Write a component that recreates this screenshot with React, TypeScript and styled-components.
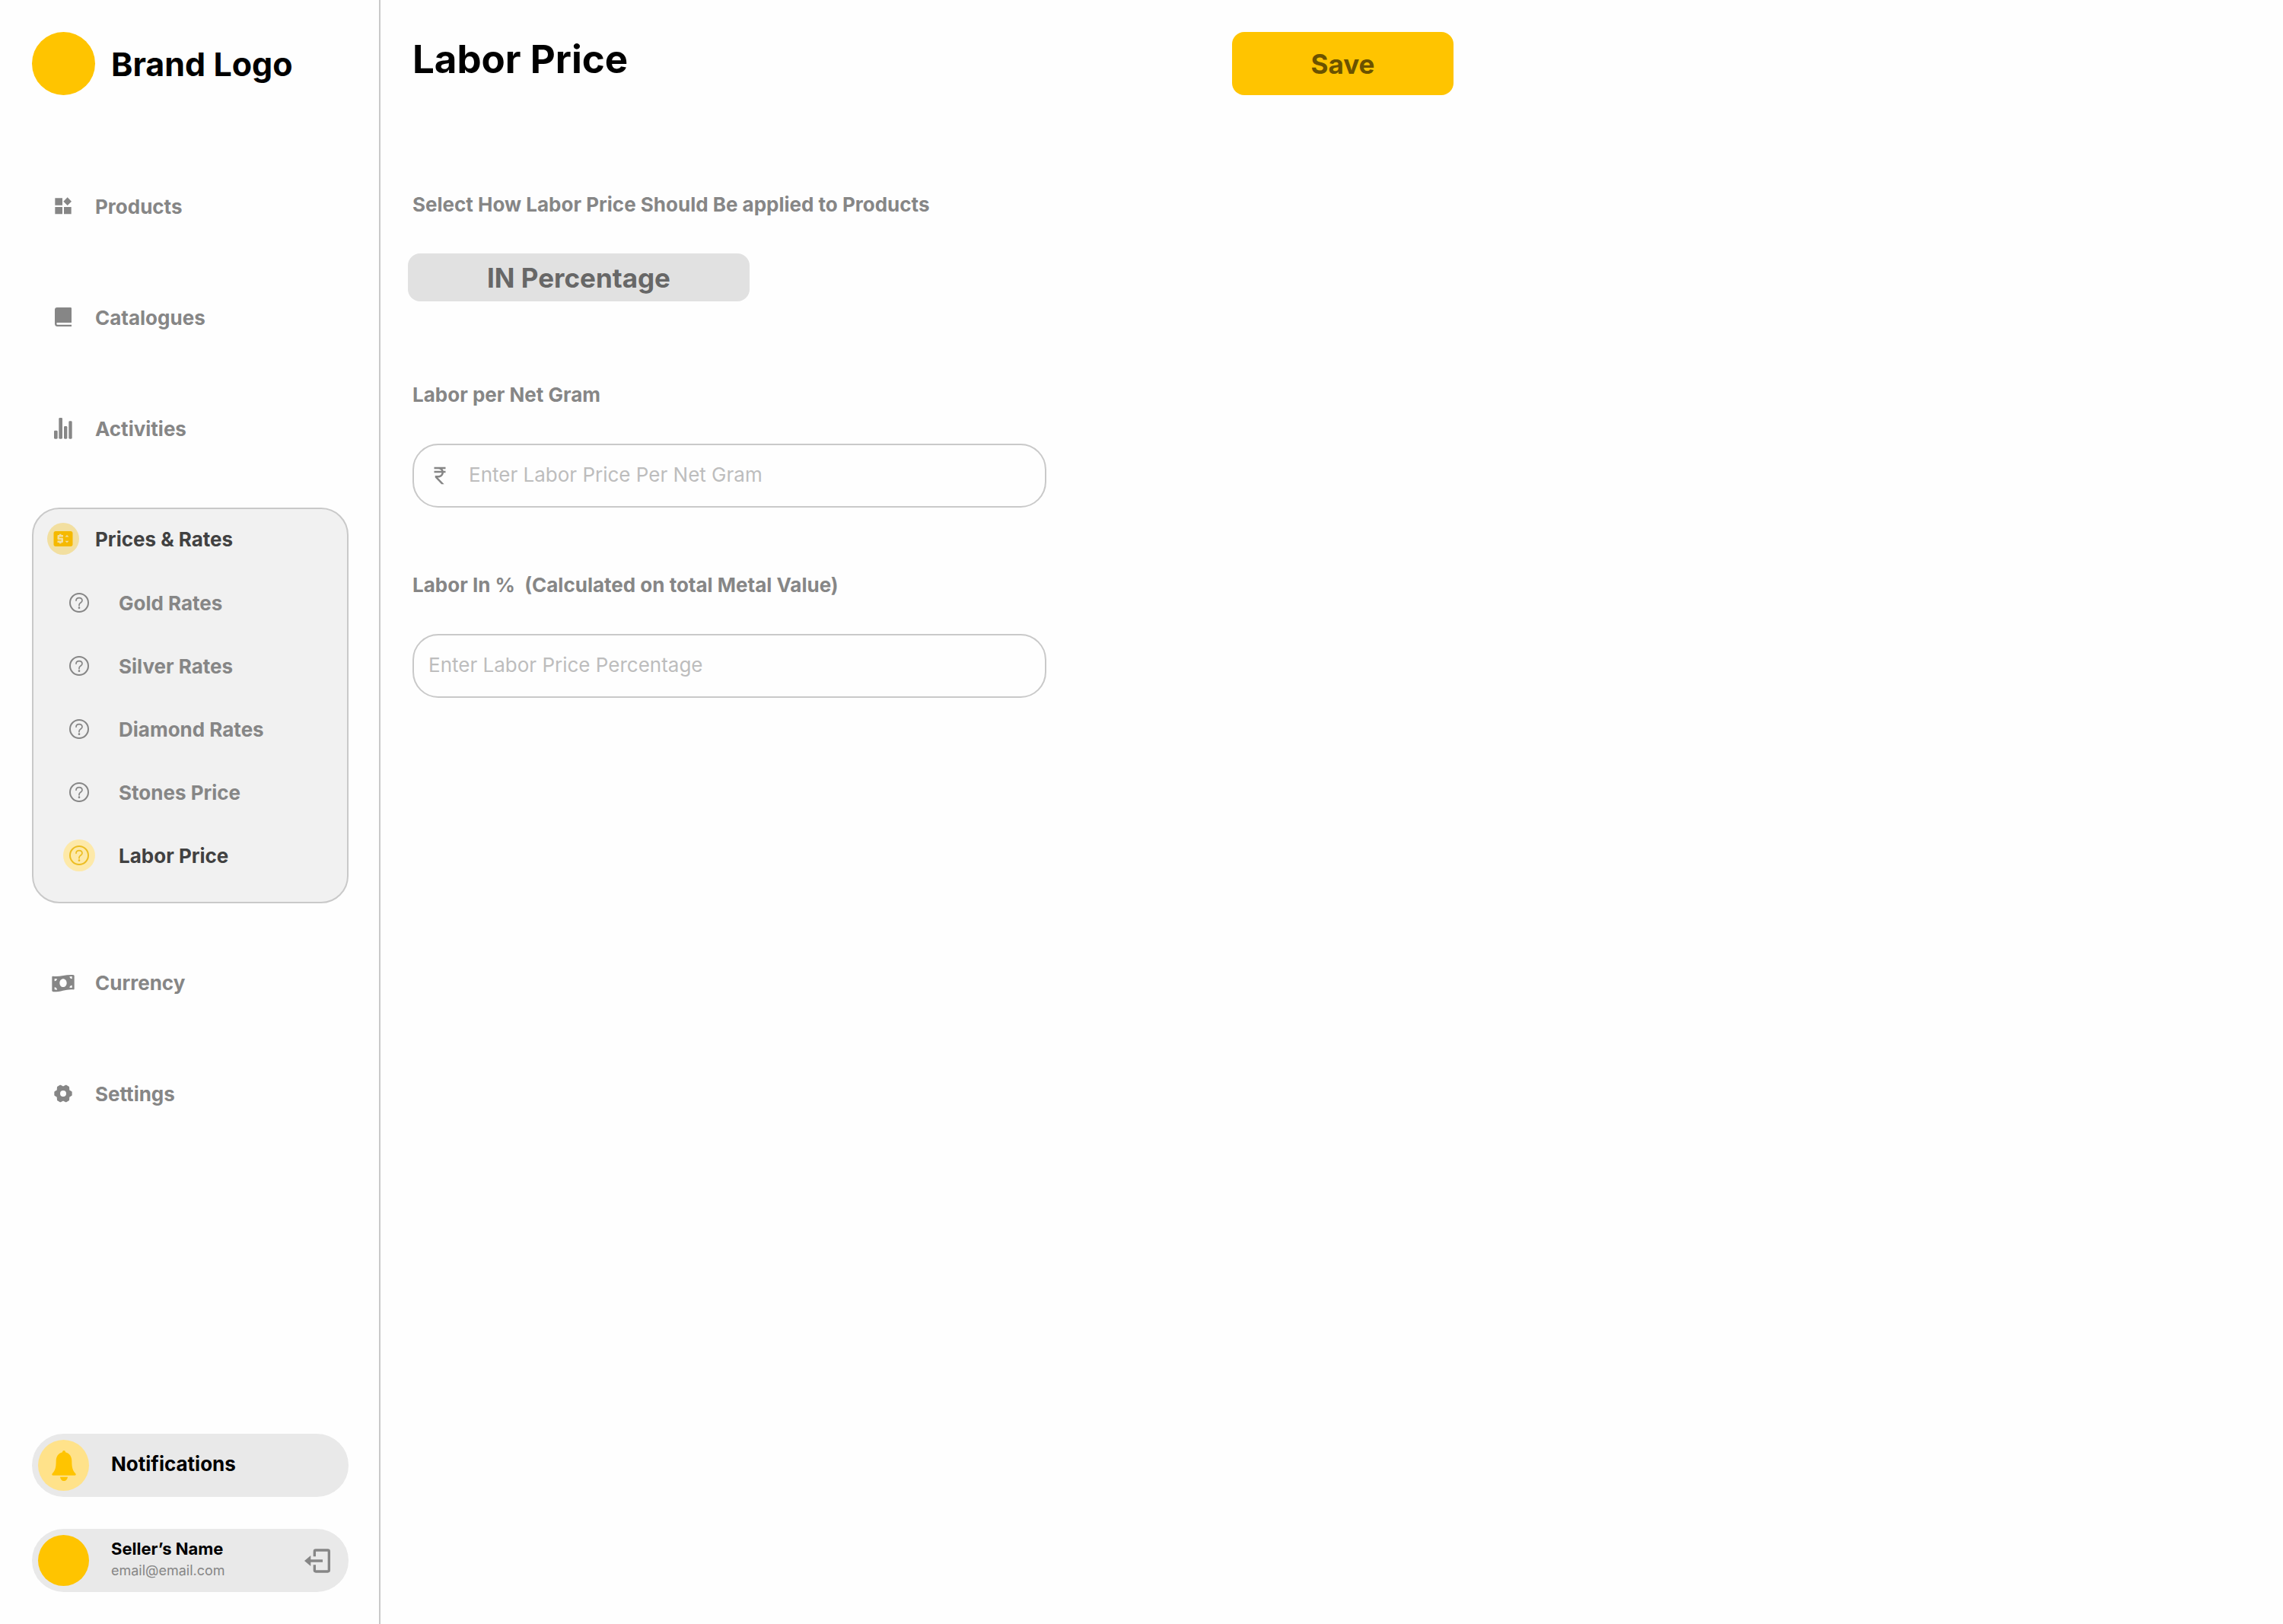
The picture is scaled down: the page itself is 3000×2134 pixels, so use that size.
import React from "react";
import styled, { createGlobalStyle, css } from "styled-components";
import { MdCurrencyRupee, MdPriceChange } from "react-icons/md";

const color = {
  brand: "#ffc400",
  brandSoft: "#ffe28a",
  muted: "#868686",
  strong: "#414141",
  line: "#c9c9c9",
  placeholder: "#bdbdbd",
  panel: "#f1f1f1",
  pill: "#e9e9e9",
};

const GlobalStyle = createGlobalStyle`
  *, *::before, *::after { box-sizing: border-box; }
  body {
    margin: 0;
    background: #fefefe;
    color: #000;
    font-family: Inter, "Open Sans", sans-serif;
  }
  button, input, select { font: inherit; color: inherit; }
  ul { list-style: none; margin: 0; padding: 0; }
  h1, p { margin: 0; }
`;

const Page = styled.div`
  display: flex;
  min-height: 100vh;
`;

const Sidebar = styled.aside`
  flex: 0 0 500px;
  display: flex;
  flex-direction: column;
  padding: 42px 40px 42px 42px;
  border-right: 2px solid ${color.line};
`;

const Brand = styled.a`
  display: flex;
  align-items: center;
  gap: 21px;
  color: #000;
  font-size: 43px;
  font-weight: 700;
  text-decoration: none;
`;

const BrandMark = styled.span`
  width: 83px;
  height: 83px;
  border-radius: 50%;
  background: ${color.brand};
`;

const Nav = styled.nav`
  display: flex;
  flex-direction: column;
  gap: 83px;
  margin: 125px 0 83px;
`;

const NavList = styled.ul`
  display: flex;
  flex-direction: column;
  gap: 104px;
  padding-left: 20px;
`;

const NavPanel = styled.section`
  padding: 18px 18px 40px;
  border: 2px solid ${color.line};
  border-radius: 36px;
  background: ${color.panel};
`;

const SubList = styled.ul`
  display: flex;
  flex-direction: column;
  gap: 41px;
  margin-top: 42px;
  padding-left: 21px;
`;

const NavLink = styled.a<{ $active?: boolean; $nested?: boolean }>`
  display: flex;
  align-items: center;
  gap: ${(p) => (p.$nested ? 31 : 21)}px;
  height: 42px;
  color: ${(p) => (p.$active ? color.strong : color.muted)};
  font-size: 26px;
  font-weight: 700;
  text-decoration: none;
  white-space: nowrap;
`;

const IconSlot = styled.span<{ $tone?: "gold" | "sun" }>`
  flex: none;
  display: grid;
  place-items: center;
  width: 42px;
  height: 42px;
  border-radius: 50%;
  ${(p) => p.$tone === "gold" && css`background: #f2dfa0; color: #f5b900;`}
  ${(p) => p.$tone === "sun" && css`background: #fde9a9; color: #ecbd22;`}
`;

const SidebarFooter = styled.div`
  display: flex;
  flex-direction: column;
  gap: 42px;
  margin-top: auto;
`;

const pill = css`
  display: flex;
  align-items: center;
  gap: 29px;
  width: 100%;
  height: 83px;
  padding: 0 24px 0 8px;
  border: 0;
  border-radius: 42px;
  background: ${color.pill};
  text-align: left;
`;

const NotificationsButton = styled.button`
  ${pill}
  font-size: 26px;
  font-weight: 700;
  cursor: pointer;
`;

const ProfileCard = styled.div`
  ${pill}
`;

const Avatar = styled.span<{ $soft?: boolean }>`
  flex: none;
  display: grid;
  place-items: center;
  width: 67px;
  height: 67px;
  border-radius: 50%;
  background: ${(p) => (p.$soft ? color.brandSoft : color.brand)};
  color: ${color.brand};
`;

const PillText = styled.span`
  flex: 1;
  padding-bottom: 4px;
`;

const SellerName = styled.p`
  font-size: 22px;
  line-height: 31px;
  font-weight: 700;
`;

const SellerEmail = styled.p`
  color: ${color.muted};
  font-size: 18px;
  line-height: 26px;
`;

const LogoutButton = styled.button`
  display: grid;
  place-items: center;
  padding: 0;
  border: 0;
  background: none;
  color: ${color.muted};
  cursor: pointer;
`;

const Main = styled.main`
  flex: 1;
  min-width: 0;
  padding: 42px;
`;

const Header = styled.header`
  display: flex;
  align-items: flex-start;
  justify-content: space-between;
  max-width: 1368px;
`;

const Title = styled.h1`
  font-size: 51px;
  line-height: 72px;
  font-weight: 700;
`;

const SaveButton = styled.button`
  width: 291px;
  height: 83px;
  border: 0;
  border-radius: 16px;
  background: ${color.brand};
  color: #6b5200;
  font-size: 35px;
  font-weight: 700;
  cursor: pointer;
`;

const Form = styled.form`
  display: flex;
  flex-direction: column;
  gap: 83px;
  margin-top: 125px;
`;

const Field = styled.div`
  display: flex;
  flex-direction: column;
  gap: 46px;
`;

const FieldLabel = styled.label`
  color: ${color.muted};
  font-size: 26px;
  line-height: 37px;
  font-weight: 700;
  white-space: pre-wrap;
`;

const Control = styled.div`
  height: 84px;
`;

const ModeSelect = styled.select`
  appearance: none;
  width: 449px;
  height: 63px;
  margin: 0 -6px;
  padding: 0;
  border: 0;
  border-radius: 16px;
  background: #e1e1e1;
  color: #676767;
  font-size: 35px;
  font-weight: 700;
  text-align: center;
  text-align-last: center;
`;

const TextBox = styled.div`
  display: flex;
  align-items: center;
  gap: 23px;
  max-width: 833px;
  height: 84px;
  padding: 0 19px;
  border: 2px solid ${color.line};
  border-radius: 34px;
  color: ${color.muted};
`;

const TextInput = styled.input`
  flex: 1;
  min-width: 0;
  height: 100%;
  padding: 0 0 4px;
  border: 0;
  outline: 0;
  background: none;
  color: ${color.strong};
  font-size: 26px;
  &::placeholder {
    color: ${color.placeholder};
    opacity: 1;
  }
`;

const Glyph = ({ children }: { children: React.ReactNode }) => (
  <svg width="42" height="42" viewBox="0 0 126 126" fill="currentColor" aria-hidden="true">
    {children}
  </svg>
);

const ProductsIcon = () => (
  <Glyph>
    <path d="M31 31h29v28H31zM31 66h29v28H31zM66 66h29v28H66zM80 28l16 16-16 16-16-16z" />
  </Glyph>
);

const CataloguesIcon = () => (
  <Glyph>
    <path d="M39 24h53q4 0 4 4v56H40q-3 0-3 4t3 4h56v7H40q-10 0-10-11V33q0-9 9-9z" />
  </Glyph>
);

const ActivitiesIcon = () => (
  <Glyph>
    <rect x="27" y="71" width="14" height="33" rx="4" />
    <rect x="46" y="21" width="14" height="83" rx="4" />
    <rect x="66" y="54" width="13" height="50" rx="4" />
    <rect x="85" y="34" width="13" height="70" rx="4" />
  </Glyph>
);

const CurrencyIcon = () => (
  <Glyph>
    <path
      fillRule="evenodd"
      d="M19 41q0-3 3-3c28 4 48-7 80-5q5 1 5 4v51q0 4-4 3c-28-3-45 9-78 9q-6-1-6-4zM63 49c-8 0-14 7-14 16s6 16 14 16 14-7 14-16-6-16-14-16zM29 48v10q8 0 10-9zM29 82v9l10 1q-1-9-10-10zM98 39l-10 1q2 9 10 9zM98 74q-9 1-10 9l10 1z"
    />
  </Glyph>
);

const SettingsIcon = () => (
  <Glyph>
    <path
      fillRule="evenodd"
      stroke="currentColor"
      strokeWidth="6"
      strokeLinejoin="round"
      d="M95 57v12L85 75.500 84 88 74 94 63 88 52 94 42 88 41 75.500 31 69V57L41 50.500 42 38 52 32 63 38 74 32 84 38 85 50.500zM63 48a15 15 0 1 0 0 30 15 15 0 1 0 0-30z"
    />
  </Glyph>
);

const QuestionIcon = () => (
  <Glyph>
    <circle cx="63" cy="63" r="36" fill="none" stroke="currentColor" strokeWidth="6" />
    <path d="M51 55c0-7 5-11 12-11s12 4 12 11c0 8-12 8-12 16v3" fill="none" stroke="currentColor" strokeWidth="5" strokeLinecap="round" />
    <circle cx="63" cy="83" r="4" />
  </Glyph>
);

const BellIcon = () => (
  <svg width="42" height="42" viewBox="-63 -63 126 126" fill="currentColor" aria-hidden="true">
    <path d="M0-60c4 0 6 3 6 7 16 4 25 17 25 35 0 24 3 36 14 48q3 3 2 6-1 2-4 2h-86q-3 0-4-2-1-3 2-6c11-12 14-24 14-48 0-18 9-31 25-35 0-4 2-7 6-7z" />
    <path d="M-15 44h30c-1 9-7 16-15 16s-14-7-15-16z" />
  </svg>
);

const LogoutIcon = () => (
  <svg width="34" height="32" viewBox="0 0 102 96" fill="none" stroke="currentColor" strokeWidth="10" aria-hidden="true">
    <path d="M40 31V11q0-5 5-5h47q5 0 5 5v74q0 5-5 5H45q-5 0-5-5V64M20 48h52" />
    <path d="M0 48l25-21v42z" fill="currentColor" stroke="none" />
  </svg>
);

type Item = { label: string; icon: React.ReactNode };

const topItems: Item[] = [
  { label: "Products", icon: <ProductsIcon /> },
  { label: "Catalogues", icon: <CataloguesIcon /> },
  { label: "Activities", icon: <ActivitiesIcon /> },
];

const rateItems = ["Gold Rates", "Silver Rates", "Diamond Rates", "Stones Price", "Labor Price"];

const bottomItems: Item[] = [
  { label: "Currency", icon: <CurrencyIcon /> },
  { label: "Settings", icon: <SettingsIcon /> },
];

const NavItems = ({ items }: { items: Item[] }) => (
  <NavList>
    {items.map((item) => (
      <li key={item.label}>
        <NavLink href="#">
          <IconSlot>{item.icon}</IconSlot>
          {item.label}
        </NavLink>
      </li>
    ))}
  </NavList>
);

export default function App() {
  return (
    <>
      <GlobalStyle />
      <Page>
        <Sidebar>
          <Brand href="#">
            <BrandMark />
            Brand Logo
          </Brand>
          <Nav>
            <NavItems items={topItems} />
            <NavPanel>
              <NavLink href="#" $active>
                <IconSlot $tone="gold">
                  <MdPriceChange size={30} />
                </IconSlot>
                Prices &amp; Rates
              </NavLink>
              <SubList>
                {rateItems.map((label) => {
                  const active = label === "Labor Price";
                  return (
                    <li key={label}>
                      <NavLink href="#" $nested $active={active} aria-current={active ? "page" : undefined}>
                        <IconSlot $tone={active ? "sun" : undefined}>
                          <QuestionIcon />
                        </IconSlot>
                        {label}
                      </NavLink>
                    </li>
                  );
                })}
              </SubList>
            </NavPanel>
            <NavItems items={bottomItems} />
          </Nav>
          <SidebarFooter>
            <NotificationsButton type="button">
              <Avatar $soft>
                <BellIcon />
              </Avatar>
              <PillText>Notifications</PillText>
            </NotificationsButton>
            <ProfileCard>
              <Avatar />
              <PillText as="div">
                <SellerName>Seller’s Name</SellerName>
                <SellerEmail>email@email.com</SellerEmail>
              </PillText>
              <LogoutButton type="button" aria-label="Log out">
                <LogoutIcon />
              </LogoutButton>
            </ProfileCard>
          </SidebarFooter>
        </Sidebar>
        <Main>
          <Header>
            <Title>Labor Price</Title>
            <SaveButton type="submit" form="labor-form">
              Save
            </SaveButton>
          </Header>
          <Form id="labor-form" onSubmit={(e) => e.preventDefault()}>
            <Field>
              <FieldLabel htmlFor="mode">Select How Labor Price Should Be applied to Products</FieldLabel>
              <Control>
                <ModeSelect id="mode">
                  <option>IN Percentage</option>
                </ModeSelect>
              </Control>
            </Field>
            <Field>
              <FieldLabel htmlFor="per-gram">Labor per Net Gram</FieldLabel>
              <TextBox>
                <MdCurrencyRupee size={30} aria-hidden="true" />
                <TextInput id="per-gram" placeholder="Enter Labor Price Per Net Gram" />
              </TextBox>
            </Field>
            <Field>
              <FieldLabel htmlFor="percent">{"Labor In %  (Calculated on total Metal Value)"}</FieldLabel>
              <TextBox>
                <TextInput id="percent" placeholder="Enter Labor Price Percentage" />
              </TextBox>
            </Field>
          </Form>
        </Main>
      </Page>
    </>
  );
}
